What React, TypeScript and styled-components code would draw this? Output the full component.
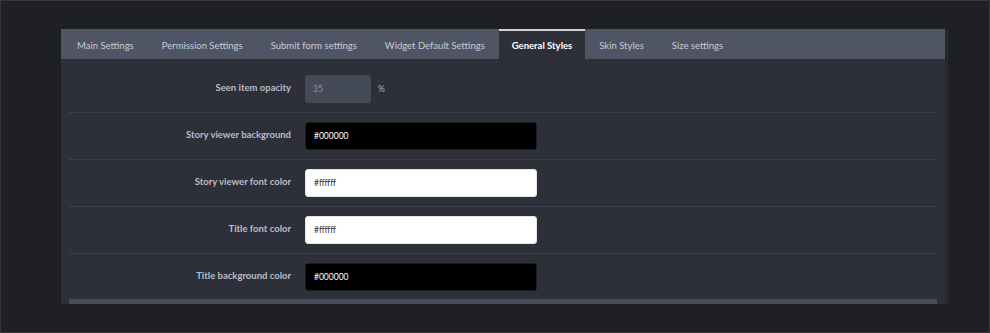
import { createGlobalStyle, styled } from 'styled-components';

const GlobalStyle = createGlobalStyle`
  html,
  body {
    margin: 0;
    padding: 0;
    background: #1f2026;
    font-family: Lato, 'Noto Sans', sans-serif;
  }
`;

const tabs = [
  'Main Settings',
  'Permission Settings',
  'Submit form settings',
  'Widget Default Settings',
  'General Styles',
  'Skin Styles',
  'Size settings',
];

const colorFields = [
  { label: 'Story viewer background', value: '#000000', dark: true },
  { label: 'Story viewer font color', value: '#ffffff', dark: false },
  { label: 'Title font color', value: '#ffffff', dark: false },
  { label: 'Title background color', value: '#000000', dark: true },
];

const App = () => {
  return (
    <>
      <GlobalStyle />
      <Frame>
        <Panel>
          <TabBar>
            {tabs.map((tab) => (
              <Tab key={tab} $active={tab === 'General Styles'}>
                {tab}
              </Tab>
            ))}
          </TabBar>
          <Body>
            <Row>
              <Label>Seen item opacity</Label>
              <Field>
                <OpacityInput>35</OpacityInput>
                <Unit>%</Unit>
              </Field>
            </Row>
            {colorFields.map((field) => (
              <Row key={field.label}>
                <Label>{field.label}</Label>
                <Field>
                  <ColorInput $dark={field.dark}>{field.value}</ColorInput>
                </Field>
              </Row>
            ))}
            <FooterStrip />
          </Body>
        </Panel>
      </Frame>
    </>
  );
};

export default App;

const Frame = styled.div`
  height: 333px;
  box-sizing: border-box;
  border: 1px solid #35363c;
  padding: 28px 0 0 60px;
  overflow: hidden;
`;

const Panel = styled.div`
  width: 884px;
  background: #2d3039;
  box-shadow: 2px 0 0 #25272d, 3px 0 0 #2a2c33;
`;

const TabBar = styled.div`
  height: 30px;
  display: flex;
  align-items: stretch;
  padding-left: 2px;
  background: #4f5565;
`;

const Tab = styled.div<{ $active?: boolean }>`
  display: flex;
  align-items: center;
  padding: 0 ${({ $active }) => ($active ? '13px' : '14px')};
  box-sizing: border-box;
  font-size: 9.5px;
  color: ${({ $active }) => ($active ? '#ffffff' : '#c8cbd3')};
  font-weight: ${({ $active }) => ($active ? 700 : 400)};
  background: ${({ $active }) => ($active ? '#2d3039' : 'transparent')};
  border-top: 2px solid ${({ $active }) => ($active ? '#cfd2d9' : 'transparent')};
  white-space: nowrap;
`;

const Body = styled.div`
  padding: 7px 8px 0;
`;

const Row = styled.div`
  display: grid;
  grid-template-columns: 222px 1fr;
  column-gap: 14px;
  align-items: center;
  padding: 9px 0;
  border-bottom: 1px solid #3c404a;

  &:nth-last-child(2) {
    border-bottom: none;
    padding-bottom: 8px;
  }
`;

const Label = styled.div`
  text-align: right;
  font-size: 9.5px;
  font-weight: 700;
  color: #b9bdc7;
  padding-bottom: 3px;
`;

const Field = styled.div`
  display: flex;
  align-items: center;
  gap: 7px;
`;

const InputBase = styled.div`
  height: 28px;
  box-sizing: border-box;
  display: flex;
  align-items: center;
  padding-left: 8px;
  border-radius: 3px;
  font-size: 8.5px;
`;

const OpacityInput = styled(InputBase)`
  width: 66px;
  background: #454a58;
  color: #8f96a6;
`;

const ColorInput = styled(InputBase)<{ $dark?: boolean }>`
  width: 232px;
  background: ${({ $dark }) => ($dark ? '#000000' : '#ffffff')};
  color: ${({ $dark }) => ($dark ? '#ffffff' : '#333333')};
  border: 1px solid ${({ $dark }) => ($dark ? '#1b1c20' : '#e6e6e6')};
`;

const Unit = styled.span`
  font-size: 8.5px;
  color: #aeb3bd;
`;

const FooterStrip = styled.div`
  height: 5px;
  background: #474c59;
`;
